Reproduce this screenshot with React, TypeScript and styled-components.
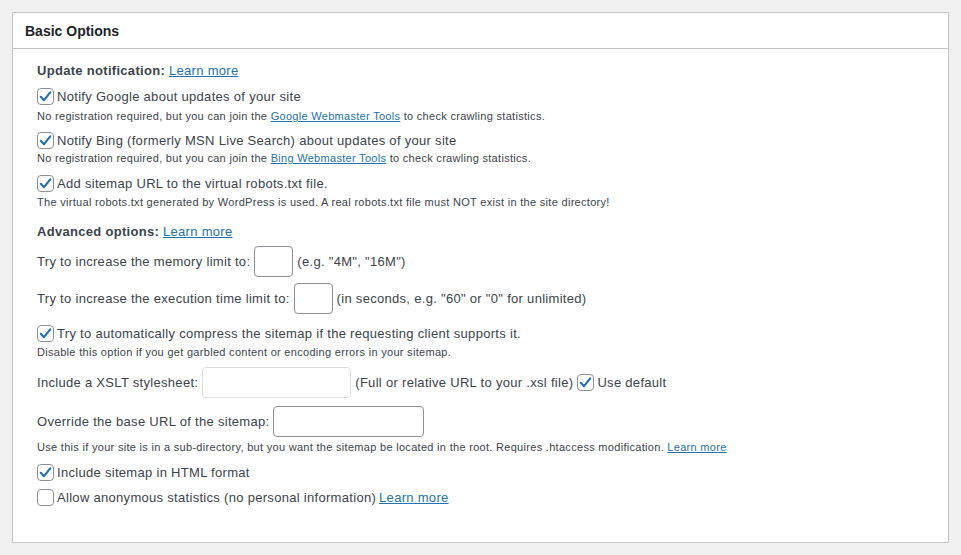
import React from 'react';
import styled, { createGlobalStyle } from 'styled-components';

const GlobalStyle = createGlobalStyle`
  body {
    margin: 0;
    background: #f0f0f1;
    font-family: "Liberation Sans", Arial, sans-serif;
    color: #3c434a;
  }
`;

const Postbox = styled.div`
  margin: 12px;
  width: 935px;
  background: #ffffff;
  border: 1px solid #c3c4c7;
`;

const PostboxHeader = styled.div`
  height: 36px;
  display: flex;
  align-items: center;
  padding: 1px 0 0 12px;
  box-sizing: border-box;
  border-bottom: 1px solid #c3c4c7;
  font-size: 14px;
  font-weight: 700;
  color: #1d2327;
`;

const Inside = styled.div`
  padding: 12px 24px 35px;
  display: flex;
  flex-direction: column;
  letter-spacing: 0.3px;
`;

const GroupTitle = styled.div<{ $mt?: number }>`
  margin-top: ${p => p.$mt ?? 0}px;
  line-height: 20px;
  font-size: 13px;
  font-weight: 700;
  color: #3c434a;
`;

const Link = styled.a`
  color: #2271b1;
  text-decoration: underline;
  font-weight: 400;
  cursor: pointer;
`;

const CheckRow = styled.label<{ $mt?: number }>`
  margin-top: ${p => p.$mt ?? 0}px;
  height: 20px;
  display: flex;
  align-items: center;
  gap: 3px;
  font-size: 13px;
  color: #3c434a;
  white-space: nowrap;
`;

const Box = styled.span`
  width: 17px;
  height: 17px;
  box-sizing: border-box;
  border: 1px solid #8c8f94;
  border-radius: 4px;
  background: #fff;
  display: inline-flex;
  align-items: center;
  justify-content: center;
  flex-shrink: 0;
`;

const Description = styled.div<{ $mt?: number }>`
  margin-top: ${p => p.$mt ?? 0}px;
  line-height: 16px;
  font-size: 11px;
  color: #3c434a;
`;

const FieldRow = styled.div<{ $mt?: number }>`
  margin-top: ${p => p.$mt ?? 0}px;
  height: 31px;
  display: flex;
  align-items: center;
  gap: 4px;
  font-size: 13px;
  color: #3c434a;
  white-space: nowrap;
`;

const TextInput = styled.input<{ $w: number; $light?: boolean }>`
  width: ${p => p.$w}px;
  height: 31px;
  box-sizing: border-box;
  border: 1px solid ${p => (p.$light ? '#dcdcde' : '#8c8f94')};
  border-radius: 4px;
  background: #fff;
  padding: 0 8px;
  margin: 0;
  font-family: inherit;
  font-size: 13px;
`;

const Checkbox: React.FC<{ checked?: boolean }> = ({ checked }) => (
  <Box>
    {checked && (
      <svg width="15" height="15" viewBox="0 0 14 14">
        <path d="M2.6 7.3 L5.6 10.4 L11.4 3.2" fill="none" stroke="#2271b1" strokeWidth="2" strokeLinecap="round" strokeLinejoin="round" />
      </svg>
    )}
  </Box>
);

const App: React.FC = () => (
  <>
    <GlobalStyle />
    <Postbox>
      <PostboxHeader>Basic Options</PostboxHeader>
      <Inside>
        <GroupTitle>
          Update notification: <Link>Learn more</Link>
        </GroupTitle>

        <CheckRow $mt={5}>
          <Checkbox checked />
          Notify Google about updates of your site
        </CheckRow>
        <Description $mt={2}>
          No registration required, but you can join the <Link>Google Webmaster Tools</Link> to check crawling statistics.
        </Description>

        <CheckRow $mt={6}>
          <Checkbox checked />
          Notify Bing (formerly MSN Live Search) about updates of your site
        </CheckRow>
        <Description>
          No registration required, but you can join the <Link>Bing Webmaster Tools</Link> to check crawling statistics.
        </Description>

        <CheckRow $mt={7}>
          <Checkbox checked />
          Add sitemap URL to the virtual robots.txt file.
        </CheckRow>
        <Description $mt={1}>
          The virtual robots.txt generated by WordPress is used. A real robots.txt file must NOT exist in the site directory!
        </Description>

        <GroupTitle $mt={12}>
          Advanced options: <Link>Learn more</Link>
        </GroupTitle>

        <FieldRow $mt={4}>
          Try to increase the memory limit to: <TextInput $w={39} /> (e.g. "4M", "16M")
        </FieldRow>

        <FieldRow $mt={6}>
          Try to increase the execution time limit to: <TextInput $w={39} /> (in seconds, e.g. "60" or "0" for unlimited)
        </FieldRow>

        <CheckRow $mt={9}>
          <Checkbox checked />
          Try to automatically compress the sitemap if the requesting client supports it.
        </CheckRow>
        <Description $mt={1}>
          Disable this option if you get garbled content or encoding errors in your sitemap.
        </Description>

        <FieldRow $mt={7}>
          Include a XSLT stylesheet: <TextInput $w={149} $light /> (Full or relative URL to your .xsl file)
          <CheckRow>
            <Checkbox checked />
            Use default
          </CheckRow>
        </FieldRow>

        <FieldRow $mt={8}>
          Override the base URL of the sitemap: <TextInput $w={151} />
        </FieldRow>
        <Description $mt={2}>
          Use this if your site is in a sub-directory, but you want the sitemap be located in the root. Requires .htaccess modification. <Link>Learn more</Link>
        </Description>

        <CheckRow $mt={7}>
          <Checkbox checked />
          Include sitemap in HTML format
        </CheckRow>
        <CheckRow $mt={5}>
          <Checkbox />
          Allow anonymous statistics (no personal information) <Link>Learn more</Link>
        </CheckRow>
      </Inside>
    </Postbox>
  </>
);

export default App;
